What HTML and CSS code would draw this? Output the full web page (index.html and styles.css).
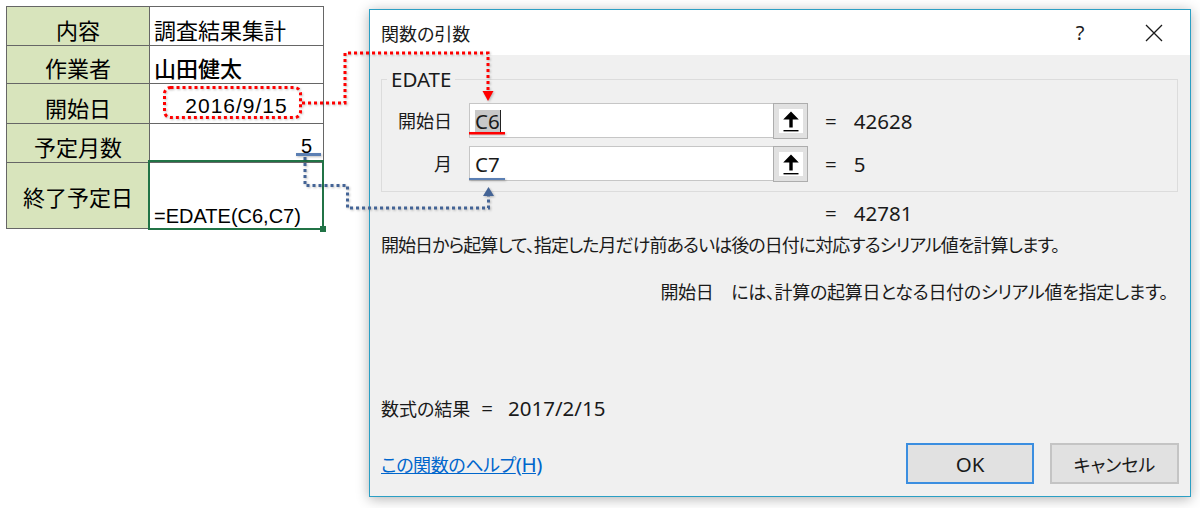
FILE: index.html
```html
<!DOCTYPE html>
<html lang="ja">
<head>
<meta charset="utf-8">
<title>関数の引数</title>
<link rel="stylesheet" href="styles.css">
</head>
<body>
<div class="page">
  <div class="sheet">
    <div class="cell cell-label">内容</div>
    <div class="cell">調査結果集計</div>
    <div class="cell cell-label">作業者</div>
    <div class="cell cell-bold">山田健太</div>
    <div class="cell cell-label">開始日</div>
    <div class="cell cell-date">2016/9/15</div>
    <div class="cell cell-label">予定月数</div>
    <div class="cell cell-num">5</div>
    <div class="cell cell-label cell-mid">終了予定日</div>
    <div class="cell cell-formula">=EDATE(C6,C7)<span class="sel-frame"></span><span class="fill-handle"></span></div>
  </div>

  <div class="dialog">
    <div class="titlebar">
      <span class="title">関数の引数</span>
      <span class="tb-help lat">?</span>
      <span class="tb-close">
        <svg width="18" height="18" viewBox="0 0 18 18"><path d="M1 1 L17 17 M17 1 L1 17" stroke="#1a1a1a" stroke-width="1.3" fill="none"/></svg>
      </span>
    </div>
    <div class="dlg-body">
      <fieldset class="group">
        <legend class="lat">EDATE</legend>
        <div class="arg-row">
          <span class="arg-label">開始日</span>
          <div class="arg-input"><span class="lat input-sel">C6</span></div>
          <span class="ref-btn"><span class="ref-inner"><svg width="24" height="24" viewBox="0 0 24 24"><path d="M12 2.5 L4.2 10.5 H10.3 V18.5 H13.7 V10.5 H19.8 Z" fill="#000"/><rect x="4.5" y="21" width="15" height="1.4" fill="#000"/></svg></span></span>
          <span class="eq lat">=</span><span class="eq-val lat">42628</span>
        </div>
        <div class="arg-row">
          <span class="arg-label">月</span>
          <div class="arg-input"><span class="lat">C7</span></div>
          <span class="ref-btn"><span class="ref-inner"><svg width="24" height="24" viewBox="0 0 24 24"><path d="M12 2.5 L4.2 10.5 H10.3 V18.5 H13.7 V10.5 H19.8 Z" fill="#000"/><rect x="4.5" y="21" width="15" height="1.4" fill="#000"/></svg></span></span>
          <span class="eq lat">=</span><span class="eq-val lat">5</span>
        </div>
      </fieldset>
      <div class="result-row"><span class="lat">=</span><span class="eq-val lat">42781</span></div>
      <p class="desc desc-main">開始日から起算して、指定した月だけ前あるいは後の日付に対応するシリアル値を計算します。</p>
      <p class="desc desc-right">開始日　には、計算の起算日となる日付のシリアル値を指定します。</p>
      <p class="formula-result">数式の結果<span class="fr-eq lat">=</span><span class="fr-val lat">2017/2/15</span></p>
      <div class="footer">
        <a class="help-link" href="#">この関数のヘルプ<span class="lat">(H)</span></a>
        <button class="btn btn-ok"><span class="lat">OK</span></button>
        <button class="btn btn-cancel">キャンセル</button>
      </div>
    </div>
  </div>

  <svg class="annot" width="1200" height="508" viewBox="0 0 1200 508">
    <g class="annot-red">
      <rect x="164.5" y="87.5" width="136" height="30" rx="6" fill="none" stroke="#ff0000" stroke-width="3" stroke-dasharray="3 3"/>
      <path d="M302 103 H345 V53 H488 V91" fill="none" stroke="#ff0000" stroke-width="3" stroke-dasharray="3 3"/>
      <path d="M482.5 91 L493.5 91 L488 101 Z" fill="#ff0000"/>
      <rect x="469" y="132" width="36" height="2.5" fill="#ff0000"/>
    </g>
    <g class="annot-blue">
      <rect x="296" y="153" width="25" height="3" fill="#5b7fb3"/>
      <path d="M305 157 V185.5 H347.5 V208 H488.5 V196" fill="none" stroke="#446496" stroke-width="3" stroke-dasharray="3 3"/>
      <path d="M483 196 L494 196 L488.5 187 Z" fill="#446496"/>
      <rect x="469" y="178" width="36" height="2" fill="#5b7fb3"/>
    </g>
  </svg>
</div>
</body>
</html>
```

FILE: styles.css
```css
html, body {
  margin: 0;
  padding: 0;
  background: #ffffff;
}

.page {
  position: relative;
  width: 1200px;
  height: 508px;
  overflow: hidden;
  box-sizing: border-box;
  padding: 6px 0 0 6px;
  display: flex;
  align-items: flex-start;
}

/* ---------- spreadsheet ---------- */
.sheet {
  flex: none;
  display: grid;
  grid-template-columns: 143px 174px;
  grid-template-rows: 39px 38px 40px 39px 66px;
  border-left: 1px solid #666666;
  border-top: 1px solid #666666;
  font-family: "Noto Sans CJK JP", sans-serif;
  font-size: 22px;
  color: #000000;
}

.cell {
  position: relative;
  box-sizing: border-box;
  border-right: 1px solid #666666;
  border-bottom: 1px solid #666666;
  display: flex;
  align-items: flex-end;
  padding: 0 4px 5px;
  line-height: 1;
  white-space: nowrap;
}

.cell-label {
  background: #d8e4bc;
  justify-content: center;
}

.cell-mid {
  align-items: center;
  padding-bottom: 0;
}

.cell-bold {
  font-weight: 500;
}

.cell-date {
  justify-content: center;
  font-family: "Liberation Sans", sans-serif;
  font-size: 21px;
  letter-spacing: 1px;
  padding-bottom: 7px;
}

.cell-num {
  justify-content: flex-end;
  font-family: "Liberation Sans", sans-serif;
  font-size: 20px;
  padding: 0 11px 6px 0;
}

.cell-formula {
  font-family: "Liberation Sans", sans-serif;
  font-size: 20px;
  padding: 0 0 2px 4px;
}

.sel-frame {
  position: absolute;
  left: -2px;
  top: -3px;
  width: 176px;
  height: 70px;
  box-sizing: border-box;
  border: 2px solid #217346;
}

.fill-handle {
  position: absolute;
  left: 170px;
  top: 63px;
  width: 6px;
  height: 6px;
  background: #217346;
}

/* ---------- dialog ---------- */
.dialog {
  flex: none;
  margin: 3px 0 0 45px;
  width: 822px;
  height: 488px;
  box-sizing: border-box;
  border: 1px solid #2b9fc4;
  background: #f0f0f0;
  box-shadow: 0 2px 12px rgba(0, 0, 0, 0.3);
  display: flex;
  flex-direction: column;
  font-family: "Noto Sans", "Noto Sans CJK JP", sans-serif;
  font-size: 18px;
  color: #1a1a1a;
  font-feature-settings: "palt";
}

.lat {
  font-size: 20.5px;
}

.titlebar {
  flex: none;
  height: 45px;
  background: #ffffff;
  display: flex;
  align-items: center;
  padding-left: 11px;
}

.title {
  flex: 1;
}

.tb-help {
  width: 46px;
  text-align: center;
  margin-right: 28px;
  font-size: 20px;
}

.tb-close {
  width: 46px;
  margin-right: 13px;
  display: flex;
  justify-content: center;
}

.dlg-body {
  flex: 1;
  display: flex;
  flex-direction: column;
  padding: 0 11px;
}

.group {
  margin: 14px 1px 0 0;
  padding: 14px 0 9px 0;
  border: 1px solid #dcdcdc;
  min-width: 0;
}

.group legend {
  margin-left: 5px;
  padding: 0 4px;
  line-height: 20px;
}

.arg-row {
  display: flex;
  align-items: flex-start;
  height: 36px;
}

.arg-row + .arg-row {
  margin-top: 7px;
}

.arg-label {
  width: 70px;
  margin-right: 17px;
  text-align: right;
  line-height: 36px;
}

.arg-input {
  width: 304px;
  height: 35px;
  box-sizing: border-box;
  background: #ffffff;
  border: 1px solid #c6c6c6;
  border-right: none;
  display: flex;
  align-items: center;
  padding-left: 5px;
}

.input-sel {
  background: #c8c8c8;
  line-height: 22px;
  border-right: 1px solid #222222;
}

.ref-btn {
  width: 35px;
  height: 36px;
  box-sizing: border-box;
  background: #e1e1e1;
  border: 1px solid #adadad;
  display: flex;
  align-items: center;
  justify-content: center;
}

.ref-inner {
  display: block;
  width: 24px;
  height: 24px;
  background: #ffffff;
}

.ref-inner svg {
  display: block;
}

.eq {
  margin-left: 17px;
  line-height: 36px;
}

.eq-val {
  margin-left: 17px;
  line-height: 36px;
}

.result-row {
  margin-top: 9px;
  line-height: 24px;
  padding-left: 444px;
}

.result-row .eq-val {
  line-height: 24px;
}

.desc {
  margin: 7px 0 0;
  line-height: 24px;
  white-space: nowrap;
}

.desc-main {
  letter-spacing: -0.95px;
}

.desc-right {
  margin-top: 23px;
  text-align: right;
  padding-right: 11px;
  letter-spacing: -0.3px;
}

.formula-result {
  margin: 92px 0 0;
  line-height: 24px;
}

.fr-eq {
  margin-left: 11px;
}

.fr-val {
  margin-left: 15px;
}

.footer {
  margin-top: 22px;
  display: flex;
  align-items: center;
}

.help-link {
  margin-right: auto;
  color: #0066cc;
  text-decoration: underline;
  letter-spacing: -0.4px;
}

.btn {
  width: 128px;
  height: 41px;
  box-sizing: border-box;
  padding: 0;
  background: #e1e1e1;
  border: 2px solid #c4c4c4;
  font: inherit;
  color: #1a1a1a;
}

.btn-ok {
  border-color: #3b8ee0;
}

.btn-cancel {
  width: 129px;
  margin-left: 16px;
}

/* ---------- annotations ---------- */
.annot {
  position: absolute;
  left: 0;
  top: 0;
  pointer-events: none;
}

.annot-red,
.annot-blue {
  filter: drop-shadow(1px 1px 1px rgba(0, 0, 0, 0.25));
}
```
